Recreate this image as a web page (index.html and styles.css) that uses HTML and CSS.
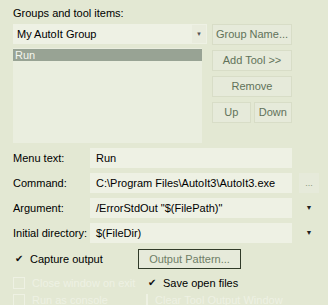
FILE: index.html
```html
<!doctype html>
<html lang="en">
<head>
<meta charset="UTF-8">
<title>Tools</title>
<link rel="stylesheet" href="styles.css">
</head>
<body>
	<div class="panel">
		<div class="caption">Groups and tool items:</div>
		<div class="top">
			<div class="left">
				<div class="combo">
					<span class="combo_text">My AutoIt Group</span>
					<span class="combo_arrow">&#9660;</span>
				</div>
				<div class="listbox">
					<div class="item selected">Run</div>
				</div>
			</div>
			<div class="buttons">
				<div class="btn">Group Name...</div>
				<div class="btn">Add Tool &gt;&gt;</div>
				<div class="btn">Remove</div>
				<div class="pair">
					<div class="btn">Up</div>
					<div class="btn">Down</div>
				</div>
			</div>
		</div>

		<div class="fields">
			<div class="label">Menu text:</div>
			<div class="edit">Run</div>
			<div></div>

			<div class="label">Command:</div>
			<div class="edit">C:\Program Files\AutoIt3\AutoIt3.exe</div>
			<div class="side">...</div>

			<div class="label">Argument:</div>
			<div class="edit">/ErrorStdOut "$(FilePath)"</div>
			<div class="side arrow">&#9660;</div>

			<div class="label">Initial directory:</div>
			<div class="edit">$(FileDir)</div>
			<div class="side arrow">&#9660;</div>
		</div>

		<div class="checks">
			<div class="check_row first">
				<div class="check on"><span class="mark">&#10004;</span>Capture output</div>
				<div class="btn default">Output Pattern...</div>
			</div>
			<div class="check_row second">
				<div class="check off"><span class="box"></span>Close window on exit</div>
				<div class="check on"><span class="mark">&#10004;</span>Save open files</div>
			</div>
			<div class="check_row">
				<div class="check off"><span class="box"></span>Run as console</div>
				<div class="check off"><span class="box"></span>Clear Tool Output Window</div>
			</div>
		</div>
	</div>
</body>
</html>
```

FILE: styles.css
```css
body{
	margin:0;
	background:#e3e8d3;
	font-family:"Liberation Sans", Arial, sans-serif;
	font-size:11px;
	color:#000;
}
.panel{
	width:328px;
	height:305px;
	overflow:hidden;
	padding:7px 0 0 13px;
	box-sizing:border-box;
}
.caption{
	height:17px;
	line-height:12px;
}
.top{
	display:flex;
	height:124px;
}
.left{
	width:194px;
}
.combo{
	height:20px;
	background:#eef1e4;
	display:flex;
	align-items:center;
	justify-content:space-between;
	padding-left:4px;
	box-sizing:border-box;
}
.combo_arrow{
	width:14px;
	height:18px;
	margin-right:1px;
	line-height:18px;
	text-align:center;
	font-size:6px;
	color:#555;
	background:#e9ecdd;
}
.listbox{
	margin-top:4px;
	width:189px;
	height:94px;
	background:#eaeedf;
	padding-top:1px;
}
.item{
	height:12px;
	line-height:12px;
	padding-left:2px;
}
.selected{
	background:#98a394;
	color:#f4f6ee;
}
.buttons{
	margin-left:5px;
	width:80px;
	display:flex;
	flex-direction:column;
	gap:5px;
}
.btn{
	height:21px;
	line-height:19px;
	box-sizing:border-box;
	border:1px solid #d8ddc7;
	background:#e6eada;
	color:#617259;
	text-align:center;
}
.pair{
	display:flex;
	gap:3px;
}
.pair .btn{
	flex:1;
}
.fields{
	display:grid;
	grid-template-columns:77px 202px 27px;
	grid-auto-rows:20px;
	row-gap:5px;
	align-items:center;
}
.label{
	line-height:20px;
}
.edit{
	height:20px;
	line-height:20px;
	background:#eef1e4;
	padding-left:6px;
	box-sizing:border-box;
	white-space:nowrap;
	overflow:hidden;
}
.side{
	margin-left:7px;
	width:20px;
	height:20px;
	line-height:20px;
	text-align:center;
	background:#e6eada;
	color:#8a9680;
	font-size:9px;
}
.side.arrow{
	font-size:7px;
	color:#222;
	background:none;
}
.checks{
	margin-top:4px;
}
.check_row{
	display:flex;
	height:17px;
	align-items:center;
	white-space:nowrap;
}
.check_row.first{
	height:23px;
}
.check_row.second{
	margin-top:4px;
}
.check{
	display:flex;
	align-items:center;
	width:133px;
	flex:none;
}
.mark{
	width:12px;
	margin-left:2px;
	margin-right:3px;
	font-size:10px;
	color:#111;
}
.box{
	width:10px;
	height:10px;
	border:1px solid #eef1e3;
	margin-right:7px;
}
.off{
	color:#eef1e3;
}
.btn.default{
	margin-left:-8px;
	width:103px;
	height:20px;
	line-height:18px;
	border:1px solid #303a28;
	color:#6f7e66;
}
```
